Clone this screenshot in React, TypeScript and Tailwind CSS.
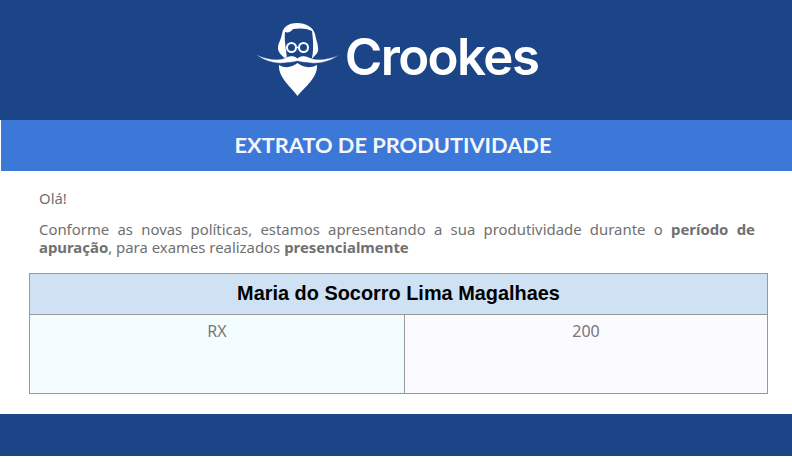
import React from 'react';

const Logo: React.FC = () => (
  <svg width="95" height="85" viewBox="0 0 95 85" className="shrink-0 mb-[5px]">
    {/* hair */}
    <path d="M47 8C38 8 33 12 32 19C31 25 28 28 28 33C28 38 32 40 35 44L62 44C65 40 69 38 68 33C68 28 66 25 65 19C63 12 56 8 47 8Z" fill="#fff" />
    {/* face */}
    <path d="M37 43C36 34 34 24 35 17C38 18 41 17 43 14C49 13 57 13 62 16C63 24 64 34 62 43Z" fill="#1c4587" />
    {/* glasses */}
    <circle cx="41.5" cy="32.5" r="4.5" fill="none" stroke="#fff" strokeWidth="2" />
    <circle cx="53.5" cy="32.5" r="4.5" fill="none" stroke="#fff" strokeWidth="2" />
    <path d="M46 32.5H49" stroke="#fff" strokeWidth="1.5" />
    {/* beard */}
    <path d="M29 50C36 54 42 52 47.5 48C53 52 59 54 67 50C68 62 55 72 47.5 81C41 72 28 62 29 50Z" fill="#fff" />
    {/* moustache */}
    <path d="M6 39.5C16 44 26 46 34 43.5C39 40 45 40 47.5 43.5C50 40 56 40 61 43.5C69 46 80 44 89 40C81 46 70 49 61 48C56 47.5 51 47 47.5 46C44 47 39 47.5 34 48C24 49 13 45 6 39.5Z" fill="#fff" stroke="#1c4587" strokeWidth="0.4" />
  </svg>
);

const App: React.FC = () => {
  return (
    <div className="w-[792px] h-[462px] bg-white overflow-hidden font-['Noto_Sans',sans-serif] text-[#707070]">
      <header className="h-[120px] bg-[#1c4587] flex items-center justify-center pr-[4px]">
        <div className="flex items-center">
          <Logo />
          <span className="text-[51px] leading-none font-semibold text-white tracking-[-1.6px] pb-[7px] font-['Inter',sans-serif]">Crookes</span>
        </div>
      </header>

      <div className="ml-[1px] h-[51px] bg-[#3c78d8] flex items-center justify-center pr-[7px]">
        <h1 className="text-[21.8px] font-bold text-[#f3f6fc] font-['Lato',sans-serif]">EXTRATO DE PRODUTIVIDADE</h1>
      </div>

      <div className="pl-[39px] pt-[18px] pr-[37px] text-[14.9px] leading-[18px]">
        <p>Olá!</p>
        <p className="mt-[13px] text-justify">
          Conforme as novas políticas, estamos apresentando a sua produtividade durante o <b>período de apuração</b>, para exames realizados <b>presencialmente</b>
        </p>
      </div>

      <div className="mx-[29px] mt-[17px] w-[739px] h-[121px] border border-[#999999] flex flex-col">
        <div className="h-[41px] bg-[#cfe2f3] border-b border-[#999999] flex items-center justify-center font-['Liberation_Sans',sans-serif] font-bold text-[19.9px] text-black pb-[1px]">
          Maria do Socorro Lima Magalhaes
        </div>
        <div className="flex-1 flex text-center text-[16px] leading-[20px] text-[#777777]">
          <div className="w-[375px] bg-[#f3fdff] border-r border-[#999999] pt-[6px]">RX</div>
          <div className="flex-1 bg-[#fafaff] pt-[6px]">200</div>
        </div>
      </div>

      <div className="mt-[20px] h-[42px] bg-[#1c4587]" />
    </div>
  );
};

export default App;
